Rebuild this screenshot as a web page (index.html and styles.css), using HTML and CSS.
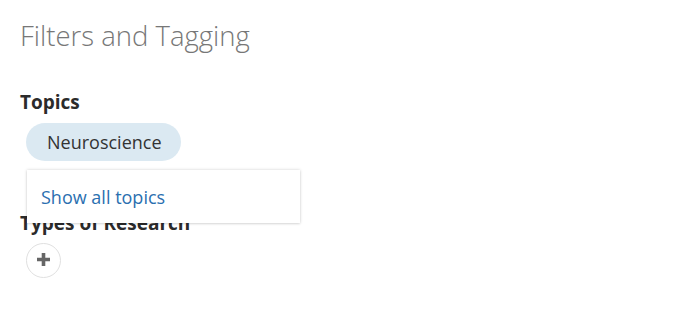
FILE: index.html
```html
<!DOCTYPE html>
<html>
<head>
<meta charset="utf-8">
<link rel="stylesheet" href="styles.css">
</head>
<body>
<div class="page">
  <h1 class="title">Filters and Tagging</h1>
  <section class="group">
    <h2 class="group-label">Topics</h2>
    <div class="tag-area">
      <span class="tag">Neuroscience</span>
      <div class="dropdown">
        <a class="dropdown-link" href="#">Show all topics</a>
      </div>
    </div>
  </section>
  <section class="group group-types">
    <h2 class="group-label">Types of Research</h2>
    <button class="add-btn" aria-label="Add">
      <svg width="13" height="13" viewBox="0 0 13 13"><path d="M6.5 0v13M0 6.5h13" stroke="#666" stroke-width="3.6" fill="none"/></svg>
    </button>
  </section>
</div>
</body>
</html>
```

FILE: styles.css
```css
html, body {
  margin: 0;
  padding: 0;
  background: #fff;
}
body {
  font-family: "Open Sans", "Noto Sans", sans-serif;
  color: #333;
}
.page {
  padding: 18px 20px 0 20px;
}
.title {
  margin: 0;
  font-weight: 300;
  font-size: 27.5px;
  line-height: 36px;
  color: #777;
}
.group {
  margin-top: 37px;
}
.group-label {
  margin: 0;
  font-size: 19px;
  font-weight: 700;
  line-height: 22px;
  color: #2b2b2b;
}
.tag-area {
  position: relative;
  padding: 10px 0 0 6px;
  height: 38px;
}
.tag {
  display: inline-block;
  background: #dbe9f2;
  color: #333;
  border-radius: 19px;
  height: 38px;
  line-height: 38px;
  padding: 0 19.5px 0 21px;
  font-size: 18px;
}
.dropdown {
  position: absolute;
  left: 7px;
  top: 57px;
  width: 273px;
  height: 53px;
  background: #fff;
  box-shadow: 0 0 3px rgba(0,0,0,0.18), 0 1px 2px rgba(0,0,0,0.08);
  display: flex;
  align-items: center;
  box-sizing: border-box;
  padding: 0 14px;
  z-index: 2;
}
.dropdown-link {
  color: #2a6fb0;
  text-decoration: none;
  font-size: 18px;
}
.group-types {
  margin-top: 51px;
}
.add-btn {
  margin: 9px 0 0 6px;
  width: 35px;
  height: 35px;
  border-radius: 50%;
  border: 1px solid #e0e0e0;
  background: #fff;
  display: flex;
  align-items: center;
  justify-content: center;
  padding: 0 0 2px 0;
}
```
